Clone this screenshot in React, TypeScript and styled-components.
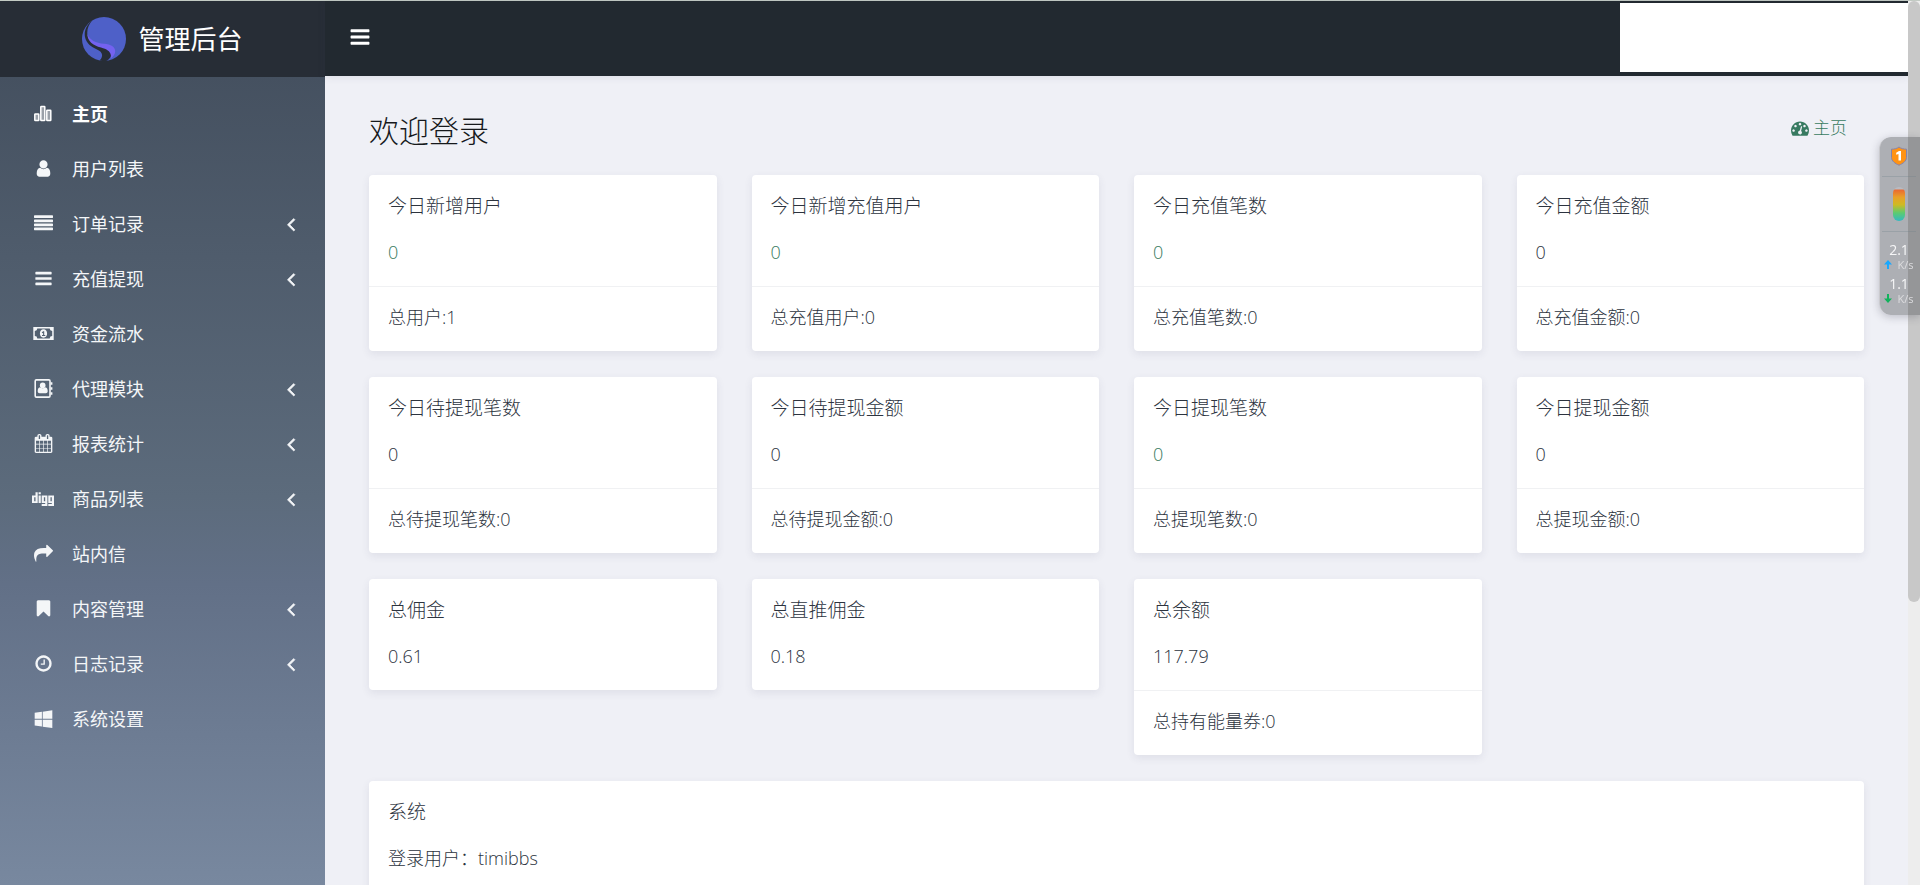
import React from "react";
import styled, { createGlobalStyle } from "styled-components";
import { FaDigg } from "react-icons/fa";

const GlobalStyle = createGlobalStyle`
  *, *::before, *::after { box-sizing: border-box; }
  body {
    margin: 0;
    background: #eff0f6;
    color: #2c333e;
    font-family: "Open Sans", "Noto Sans CJK SC", sans-serif;
    font-size: 18px;
    font-weight: 300;
    line-height: 26px;
  }
  a { color: inherit; text-decoration: none; }
  h1, h2, p, ul { margin: 0; padding: 0; }
  ul { list-style: none; }
  button { font: inherit; }
`;

/* ---------- Icons ---------- */

const IconSvg = styled.svg<{ $size: number }>`
  display: block;
  flex: none;
  width: ${(p) => p.$size}px;
  height: ${(p) => p.$size}px;
  fill: currentColor;
`;

const PATHS = {
  user: "M1536 1399q0 109-62.5 187t-150.5 78h-854q-88 0-150.5-78t-62.5-187q0-85 8.5-160.5t31.5-152 58.5-131 94-89 134.5-34.5q131 128 313 128t313-128q76 0 134.5 34.5t94 89 58.5 131 31.5 152 8.5 160.5zm-256-887q0 159-112.5 271.5t-271.5 112.5-271.5-112.5-112.5-271.5 112.5-271.5 271.5-112.5 271.5 112.5 112.5 271.5z",
  bars: "M1664 1344v128q0 26-19 45t-45 19h-1408q-26 0-45-19t-19-45v-128q0-26 19-45t45-19h1408q26 0 45 19t19 45zm0-512v128q0 26-19 45t-45 19h-1408q-26 0-45-19t-19-45v-128q0-26 19-45t45-19h1408q26 0 45 19t19 45zm0-512v128q0 26-19 45t-45 19h-1408q-26 0-45-19t-19-45v-128q0-26 19-45t45-19h1408q26 0 45 19t19 45z",
  justify:
    "M1792 1344v128q0 26-19 45t-45 19h-1664q-26 0-45-19t-19-45v-128q0-26 19-45t45-19h1664q26 0 45 19t19 45zm0-384v128q0 26-19 45t-45 19h-1664q-26 0-45-19t-19-45v-128q0-26 19-45t45-19h1664q26 0 45 19t19 45zm0-384v128q0 26-19 45t-45 19h-1664q-26 0-45-19t-19-45v-128q0-26 19-45t45-19h1664q26 0 45 19t19 45zm0-384v128q0 26-19 45t-45 19h-1664q-26 0-45-19t-19-45v-128q0-26 19-45t45-19h1664q26 0 45 19t19 45z",
  share:
    "M1792 640q0 26-19 45l-512 512q-19 19-45 19t-45-19-19-45v-256h-224q-98 0-175.5 6t-154 21.5-133 42.5-105.5 69.5-80 101-48.5 138.5-17.5 181q0 55 5 123 0 6 2.5 23.5t2.5 26.5q0 15-8.5 25t-23.5 10q-16 0-28-17-7-9-13-22t-13.5-30-10.5-24q-127-285-127-451 0-199 53-333 162-403 875-403h224v-256q0-26 19-45t45-19 45 19l512 512q19 19 19 45z",
  bookmark:
    "M1420 128q23 0 44 9 33 13 52.5 41t19.5 62v1289q0 34-19.5 62t-52.5 41q-19 8-44 8-48 0-83-32l-441-424-441 424q-36 33-83 33-23 0-44-9-33-13-52.5-41t-19.5-62v-1289q0-34 19.5-62t52.5-41q21-9 44-9h1048z",
  clock:
    "M1024 544v448q0 14-9 23t-23 9h-320q-14 0-23-9t-9-23v-64q0-14 9-23t23-9h224v-352q0-14 9-23t23-9h64q14 0 23 9t9 23zm416 352q0-148-73-273t-198-198-273-73-273 73-198 198-73 273 73 273 198 198 273 73 273-73 198-198 73-273zm224 0q0 209-103 385.5t-279.5 279.5-385.5 103-385.5-103-279.5-279.5-103-385.5 103-385.5 279.5-279.5 385.5-103 385.5 103 279.5 279.5 103 385.5z",
  windows:
    "M746 1006v651l-682-94v-557h682zm0-743v659h-682v-565zm982 743v786l-907-125v-661h907zm0-878v794h-907v-669z",
  calendar:
    "M192 1664h288v-288h-288v288zm352 0h320v-288h-320v288zm-352-352h288v-320h-288v320zm352 0h320v-320h-320v320zm-352-384h288v-288h-288v288zm736 736h320v-288h-320v288zm-384-736h320v-288h-320v288zm768 736h288v-288h-288v288zm-384-352h320v-320h-320v320zm-352-864v-288q0-13-9.5-22.5t-22.5-9.5h-64q-13 0-22.5 9.5t-9.5 22.5v288q0 13 9.5 22.5t22.5 9.5h64q13 0 22.5-9.5t9.5-22.5zm736 864h288v-320h-288v320zm-384-384h320v-288h-320v288zm384 0h288v-288h-288v288zm32-480v-288q0-13-9.5-22.5t-22.5-9.5h-64q-13 0-22.5 9.5t-9.5 22.5v288q0 13 9.5 22.5t22.5 9.5h64q13 0 22.5-9.5t9.5-22.5zm384-64v1280q0 52-38 90t-90 38h-1408q-52 0-90-38t-38-90v-1280q0-52 38-90t90-38h128v-96q0-66 47-113t113-47h64q66 0 113 47t47 113v96h384v-96q0-66 47-113t113-47h64q66 0 113 47t47 113v96h128q52 0 90 38t38 90z",
  left: "M1203 544q0 13-10 23l-393 393 393 393q10 10 10 23t-10 23l-50 50q-10 10-23 10t-23-10l-466-466q-10-10-10-23t10-23l466-466q10-10 23-10t23 10l50 50q10 10 10 23z",
  gauge:
    "M384 1152q0-53-37.5-90.5t-90.5-37.5-90.5 37.5-37.5 90.5 37.5 90.5 90.5 37.5 90.5-37.5 37.5-90.5zm192-448q0-53-37.5-90.5t-90.5-37.5-90.5 37.5-37.5 90.5 37.5 90.5 90.5 37.5 90.5-37.5 37.5-90.5zm428 481l101-382q6-26-7.5-48.5t-38.5-29.5-48 6.5-30 39.5l-101 382q-60 5-107 43.5t-63 98.5q-20 77 20 146t117 89 146-20 89-117q16-60-6-117t-72-91zm660-33q0-53-37.5-90.5t-90.5-37.5-90.5 37.5-37.5 90.5 37.5 90.5 90.5 37.5 90.5-37.5 37.5-90.5zm-640-640q0-53-37.5-90.5t-90.5-37.5-90.5 37.5-37.5 90.5 37.5 90.5 90.5 37.5 90.5-37.5 37.5-90.5zm448 192q0-53-37.5-90.5t-90.5-37.5-90.5 37.5-37.5 90.5 37.5 90.5 90.5 37.5 90.5-37.5 37.5-90.5zm320 448q0 261-141 483-19 29-54 29h-1402q-35 0-54-29-141-221-141-483 0-182 71-348t191-286 286-191 348-71 348 71 286 191 191 286 71 348z",
};

function Icon({ name, size = 19 }: { name: keyof typeof PATHS; size?: number }) {
  return (
    <IconSvg $size={size} viewBox="0 0 1792 1792" aria-hidden="true">
      <path d={PATHS[name]} stroke="currentColor" strokeWidth={name === "left" ? 60 : 0} />
    </IconSvg>
  );
}

const ChartIcon = () => (
  <IconSvg $size={20} viewBox="0 0 20 20" aria-hidden="true">
    <g fill="currentColor" fillOpacity="0.45" stroke="currentColor" strokeWidth="1.5">
      <rect x="1.8" y="10" width="4" height="6.500" rx="0.500" />
      <rect x="7.8" y="2.500" width="4" height="14" rx="0.500" />
      <rect x="13.800" y="6.200" width="4" height="10.300" rx="0.500" />
    </g>
  </IconSvg>
);

const MoneyIcon = () => (
  <IconSvg $size={21} viewBox="0 0 21 21" aria-hidden="true">
    <path
      fillRule="evenodd"
      d="M.3 4h20.400v13H.3zM4.300 5.600A2.500 2.500 0 0 1 1.800 8v5a2.500 2.500 0 0 1 2.500 2.400h12.400a2.500 2.500 0 0 1 2.500-2.400V8a2.500 2.500 0 0 1-2.500-2.400z"
    />
    <path
      fillRule="evenodd"
      d="M10.500 6.300c2.300 0 3.600 2 3.600 4.200s-1.300 4.200-3.600 4.200-3.600-2-3.600-4.200 1.300-4.200 3.600-4.200zM10.100 8.200 8.700 9.500l.7.8.7-.6v2.400H9v1h3.300v-1h-1.100V8.200z"
    />
  </IconSvg>
);

const AddressIcon = () => (
  <IconSvg $size={19} viewBox="0 0 19 19" aria-hidden="true">
    <rect x="1.200" y="0.900" width="14.800" height="17.200" rx="1.200" fill="none" stroke="currentColor" strokeWidth="1.600" />
    <circle cx="8.700" cy="6.400" r="2.800" />
    <path d="M6 8.300c-1.600.3-2.300 2-2.300 4 0 1.200.8 2 1.900 2h6.200c1.100 0 1.900-.8 1.900-2 0-2-.7-3.700-2.300-4-1.500 1.300-3.900 1.300-5.400 0z" />
    <path d="M16.500 3.200h1.900v2.600h-1.900zM16.500 8.200h1.900v2.600h-1.900zM16.500 13.200h1.900v2.600h-1.900z" />
  </IconSvg>
);

const Logo = () => (
  <IconSvg $size={44} viewBox="0 0 44 44" role="img" aria-label="logo">
    <circle cx="22" cy="22" r="22" fill="#4e60c8" />
    <path
      d="M10.500 3C4.500 8 1.800 14 3 20c1.200 6.500 6.500 9.800 11.500 12.200C18.500 34 20.500 36 20 39c-.2 1.800-1 3.200-2.600 4.500 3 .8 5.600.6 7.600.2 2.800-2 5.500-5.500 4.500-9.500-1-3.500-5-5-10-6.400C11.500 25.600 6 22.500 5.300 16.500 5 12 7 7 10.500 3z"
      fill="#272d36"
    />
    <path
      d="M5.300 16.500C7.500 23.500 14 26 22 26.800c7 .8 11 3 11.200 7.200 0 3-1.600 5.400-4.400 7.400.2-1.400.2-2 0-3.400-.7-3.800-4-5.700-9.800-7.400C11 28.300 5.300 24.500 5.300 16.500z"
      fill="#7462f0"
    />
  </IconSvg>
);

/* ---------- Shell ---------- */

const Shell = styled.div`
  display: flex;
  height: 100vh;
  border-top: 1px solid #c3cbc4;
`;

const Sidebar = styled.aside`
  display: flex;
  flex-direction: column;
  flex: 0 0 325px;
  background: linear-gradient(180deg, #414c5b 0%, #5c6b7c 56%, #627087 66%, #78889f 100%);
  color: #f4f6f8;
  font-weight: 400;
`;

const Brand = styled.a`
  display: flex;
  align-items: center;
  justify-content: center;
  gap: 12px;
  height: 76px;
  background: #272d36;
  color: #fff;
  font-size: 26px;
`;

const Menu = styled.ul`
  padding-top: 9px;
`;

const MenuLink = styled.a<{ $active?: boolean }>`
  display: flex;
  align-items: center;
  gap: 18px;
  height: 55px;
  padding: 0 23px 0 32px;
  color: ${(p) => (p.$active ? "#fff" : "inherit")};
  font-weight: ${(p) => (p.$active ? 700 : 400)};
`;

const MenuIcon = styled.span`
  display: flex;
  justify-content: center;
  flex: 0 0 22px;
`;

const MenuLabel = styled.span`
  flex: 1;
`;

const Page = styled.div`
  display: flex;
  flex-direction: column;
  flex: 1;
  min-width: 0;
  margin-right: 12px;
`;

const Header = styled.header`
  display: flex;
  align-items: flex-start;
  justify-content: space-between;
  flex: 0 0 75px;
  padding: 2px 0 0 24px;
  background: #222930;
  box-shadow: 0 1px 8px rgba(60, 60, 100, 0.1);
`;

const Toggle = styled.button`
  padding: 23px 0;
  border: 0;
  background: none;
  color: #fff;
  cursor: pointer;
`;

const AccountPanel = styled.div`
  width: 288px;
  height: 69px;
  background: #fff;
`;

const Content = styled.main`
  flex: 1;
  min-height: 0;
  overflow-y: auto;
  scrollbar-width: none;
  padding: 35px 44px 26px;
`;

const TitleRow = styled.div`
  display: flex;
  justify-content: space-between;
  align-items: center;
  margin-bottom: 24px;
`;

const PageTitle = styled.h1`
  color: #16191c;
  font-size: 30px;
  font-weight: 300;
  line-height: 40px;
`;

const Crumb = styled.a`
  display: flex;
  align-items: center;
  gap: 4px;
  padding: 0 17px 6px 0;
  color: #377a60;
  font-size: 17px;
`;

/* ---------- Cards ---------- */

const CardGrid = styled.div`
  display: grid;
  grid-template-columns: repeat(4, 1fr);
  align-items: start;
  gap: 26px 35px;
`;

const Card = styled.section<{ $wide?: boolean }>`
  grid-column: ${(p) => (p.$wide ? "1 / -1" : "auto")};
  min-height: ${(p) => (p.$wide ? "200px" : "0")};
  border-radius: 4px;
  background: #fff;
  box-shadow: 0 3px 8px rgba(60, 60, 90, 0.09);
`;

const CardBody = styled.div`
  display: grid;
  gap: 20px;
  padding: 18px 19px 21px;
`;

const CardTitle = styled.h2`
  font-size: 19px;
  font-weight: 300;
  line-height: 26px;
`;

const CardLink = styled.a`
  color: #377a60;
`;

const CardFooter = styled.p`
  padding: 17px 19px 21px;
  border-top: 1px solid #f0f1f3;
`;

/* ---------- Scroll bar and network monitor ---------- */

const ScrollTrack = styled.div`
  position: fixed;
  top: 1px;
  right: 0;
  bottom: 0;
  width: 12px;
  background: #ededed;
`;

const ScrollThumb = styled.div`
  height: 68%;
  border-radius: 6px;
  background: #c8c8c8;
`;

const Monitor = styled.aside`
  position: fixed;
  top: 137px;
  right: 0;
  display: flex;
  flex-direction: column;
  align-items: center;
  width: 41px;
  height: 178px;
  padding: 9px 2px 0 0;
  border-left: 1px solid rgba(255, 255, 255, 0.35);
  border-radius: 12px 0 0 12px;
  background: rgba(66, 68, 74, 0.38);
  box-shadow: 0 2px 8px rgba(40, 40, 60, 0.25);
  color: #f6f6f7;
  font-family: "Open Sans", sans-serif;
  font-size: 14px;
  font-weight: 400;
  line-height: 16px;
`;

const Shield = styled.svg`
  display: block;
  width: 18px;
  height: 20px;
`;

const Rule = styled.span`
  width: 34px;
  height: 1px;
  margin: 10px 0;
  background: rgba(110, 125, 135, 0.3);
`;

const Meter = styled.span`
  width: 12px;
  height: 34px;
  border-radius: 6px;
  background: linear-gradient(180deg, #b9bbc2 0 2px, #ea6a30 3px, #e9a028 30%, #cfba22 52%, #5ccb70 76%, #33b9c2 100%);
`;

const Speed = styled.div`
  display: grid;
  justify-items: center;
  margin-bottom: 5px;
`;

const Unit = styled.span`
  display: flex;
  align-items: center;
  gap: 5px;
  color: #dcdcde;
  font-size: 11px;
  line-height: 13px;
`;

const SpeedArrow = ({ down }: { down?: boolean }) => (
  <svg width="8" height="10" viewBox="0 0 8 10" aria-hidden="true">
    <path
      d={down ? "M3 0h2v4.500h3L4 9 0 4.500h3z" : "M4 0 8 4.500H5V9H3V4.500H0z"}
      fill={down ? "#12b25c" : "#18a8ff"}
    />
  </svg>
);

/* ---------- Data ---------- */

type MenuEntry = { label: string; icon: React.ReactNode; expandable?: boolean; active?: boolean };

const menu: MenuEntry[] = [
  { label: "主页", icon: <ChartIcon />, active: true },
  { label: "用户列表", icon: <Icon name="user" /> },
  { label: "订单记录", icon: <Icon name="justify" />, expandable: true },
  { label: "充值提现", icon: <Icon name="bars" />, expandable: true },
  { label: "资金流水", icon: <MoneyIcon /> },
  { label: "代理模块", icon: <AddressIcon />, expandable: true },
  { label: "报表统计", icon: <Icon name="calendar" />, expandable: true },
  { label: "商品列表", icon: <FaDigg size={22} aria-hidden="true" />, expandable: true },
  { label: "站内信", icon: <Icon name="share" /> },
  { label: "内容管理", icon: <Icon name="bookmark" />, expandable: true },
  { label: "日志记录", icon: <Icon name="clock" />, expandable: true },
  { label: "系统设置", icon: <Icon name="windows" /> },
];

type Stat = { title: string; value: string; total?: string; link?: boolean };

const stats: Stat[] = [
  { title: "今日新增用户", value: "0", total: "总用户:1", link: true },
  { title: "今日新增充值用户", value: "0", total: "总充值用户:0", link: true },
  { title: "今日充值笔数", value: "0", total: "总充值笔数:0", link: true },
  { title: "今日充值金额", value: "0", total: "总充值金额:0" },
  { title: "今日待提现笔数", value: "0", total: "总待提现笔数:0" },
  { title: "今日待提现金额", value: "0", total: "总待提现金额:0" },
  { title: "今日提现笔数", value: "0", total: "总提现笔数:0", link: true },
  { title: "今日提现金额", value: "0", total: "总提现金额:0" },
  { title: "总佣金", value: "0.61" },
  { title: "总直推佣金", value: "0.18" },
  { title: "总余额", value: "117.79", total: "总持有能量券:0" },
];

export default function App() {
  return (
    <>
      <GlobalStyle />
      <Shell>
        <Sidebar>
          <Brand href="#">
            <Logo />
            管理后台
          </Brand>
          <nav>
            <Menu>
              {menu.map((item) => (
                <li key={item.label}>
                  <MenuLink href="#" $active={item.active}>
                    <MenuIcon>{item.icon}</MenuIcon>
                    <MenuLabel>{item.label}</MenuLabel>
                    {item.expandable && <Icon name="left" size={22} />}
                  </MenuLink>
                </li>
              ))}
            </Menu>
          </nav>
        </Sidebar>
        <Page>
          <Header>
            <Toggle type="button" aria-label="菜单">
              <Icon name="bars" size={22} />
            </Toggle>
            <AccountPanel />
          </Header>
          <Content>
            <TitleRow>
              <PageTitle>欢迎登录</PageTitle>
              <Crumb href="#">
                <Icon name="gauge" size={18} />
                主页
              </Crumb>
            </TitleRow>
            <CardGrid>
              {stats.map((s) => (
                <Card key={s.title}>
                  <CardBody>
                    <CardTitle>{s.title}</CardTitle>
                    <p>{s.link ? <CardLink href="#">{s.value}</CardLink> : s.value}</p>
                  </CardBody>
                  {s.total && <CardFooter>{s.total}</CardFooter>}
                </Card>
              ))}
              <Card $wide>
                <CardBody>
                  <CardTitle>系统</CardTitle>
                  <p>登录用户：timibbs</p>
                </CardBody>
              </Card>
            </CardGrid>
          </Content>
        </Page>
      </Shell>
      <ScrollTrack aria-hidden="true">
        <ScrollThumb />
      </ScrollTrack>
      <Monitor>
        <Shield viewBox="0 0 18 20" aria-hidden="true">
          <path
            d="M9 1c2 1.500 4.500 2.200 7.500 2.200v8.300c0 3.500-3.500 6-7.500 7.700-4-1.700-7.500-4.200-7.500-7.700V3.200C4.500 3.200 7 2.500 9 1z"
            fill="#ff9314"
            stroke="#8583ab"
            strokeWidth="1"
          />
          <path d="M6.200 6.800 9 5h2v9.500H8.500V7.900l-2.300.9z" fill="#fff" />
        </Shield>
        <Rule />
        <Meter />
        <Rule />
        <Speed>
          2.1
          <Unit>
            <SpeedArrow />
            K/s
          </Unit>
        </Speed>
        <Speed>
          1.1
          <Unit>
            <SpeedArrow down />
            K/s
          </Unit>
        </Speed>
      </Monitor>
    </>
  );
}
